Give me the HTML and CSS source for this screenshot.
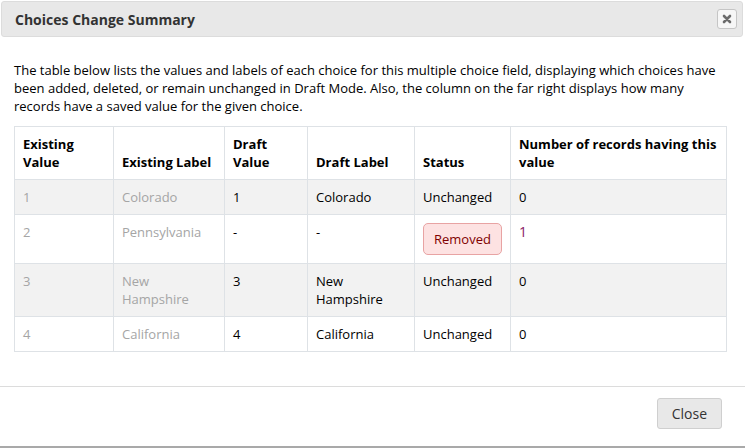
FILE: index.html
```html
<!DOCTYPE html>
<html lang="en">
<head>
    <meta charset="UTF-8">
    <title>Choices Change Summary</title>
    <link rel="stylesheet" href="styles.css">
</head>
<body>
    <div class="dialog">
        <div class="titlebar">
            <span class="title">Choices Change Summary</span>
            <button class="close-x" title="Close">
                <svg width="10" height="10" viewBox="0 0 10 10">
                    <path d="M2 2 L8 8 M8 2 L2 8" stroke="#6b6b6b" stroke-width="2.6" stroke-linecap="round"/>
                </svg>
            </button>
        </div>

        <div class="content">
            <p class="intro">The table below lists the values and labels of each choice for this multiple choice field, displaying which choices have been added, deleted, or remain unchanged in Draft Mode. Also, the column on the far right displays how many records have a saved value for the given choice.</p>

            <table class="summary">
                <colgroup>
                    <col style="width: 99px">
                    <col style="width: 111px">
                    <col style="width: 83px">
                    <col style="width: 107px">
                    <col style="width: 96px">
                    <col style="width: 216px">
                </colgroup>
                <thead>
                    <tr>
                        <th>Existing Value</th>
                        <th>Existing Label</th>
                        <th>Draft Value</th>
                        <th>Draft Label</th>
                        <th>Status</th>
                        <th>Number of records having this value</th>
                    </tr>
                </thead>
                <tbody>
                    <tr>
                        <td class="old">1</td>
                        <td class="old">Colorado</td>
                        <td>1</td>
                        <td>Colorado</td>
                        <td>Unchanged</td>
                        <td>0</td>
                    </tr>
                    <tr>
                        <td class="old">2</td>
                        <td class="old">Pennsylvania</td>
                        <td>-</td>
                        <td>-</td>
                        <td><span class="removed">Removed</span></td>
                        <td><a class="count" href="#">1</a></td>
                    </tr>
                    <tr>
                        <td class="old">3</td>
                        <td class="old">New Hampshire</td>
                        <td>3</td>
                        <td>New Hampshire</td>
                        <td>Unchanged</td>
                        <td>0</td>
                    </tr>
                    <tr>
                        <td class="old">4</td>
                        <td class="old">California</td>
                        <td>4</td>
                        <td>California</td>
                        <td>Unchanged</td>
                        <td>0</td>
                    </tr>
                </tbody>
            </table>
        </div>

        <div class="footer">
            <button class="btn">Close</button>
        </div>
    </div>
</body>
</html>
```

FILE: styles.css
```css
body {
    margin: 0;
    font-family: "Open Sans", Arial, sans-serif;
    font-size: 13px;
    color: #000;
    background-color: #fff;
}

.dialog {
    width: 745px;
    height: 448px;
    box-sizing: border-box;
    display: flex;
    flex-direction: column;
    border-bottom: 2px solid #a9a9a9;
}

.titlebar {
    display: flex;
    align-items: center;
    justify-content: space-between;
    height: 34px;
    margin: 1px 2px 0 1px;
    padding: 0 5px 0 13px;
    background-color: #e8e8e8;
    border: 1px solid #dcdcdc;
    border-radius: 3px;
}

.title {
    font-size: 14px;
    font-weight: bold;
    color: #333;
}

.close-x {
    display: flex;
    align-items: center;
    justify-content: center;
    width: 20px;
    height: 20px;
    padding: 0;
    background-color: #f6f6f6;
    border: 1px solid #c5c5c5;
    border-radius: 3px;
}

.content {
    flex: 1;
    padding: 0 14px;
    border-bottom: 1px solid #dcdcdc;
}

.intro {
    margin: 24px 0 11px;
    line-height: 18px;
}

.summary {
    width: 712px;
    border-collapse: collapse;
    table-layout: fixed;
    line-height: 18px;
}

.summary th,
.summary td {
    padding: 8px;
    border: 1px solid #dee2e6;
    text-align: left;
    vertical-align: top;
}

.summary th {
    vertical-align: bottom;
    font-weight: bold;
}

.summary tbody tr:nth-child(odd) {
    background-color: #f2f2f2;
}

.summary .old {
    color: #a5a5a5;
}

.removed {
    display: inline-block;
    padding: 6px 10px;
    color: #800000;
    background-color: #fde2e2;
    border: 1px solid #e8a3a3;
    border-radius: 5px;
}

.count {
    color: #8b1a66;
    font-size: 14px;
    text-decoration: none;
}

.footer {
    display: flex;
    justify-content: flex-end;
    height: 59px;
    padding: 11px 23px 0 0;
    box-sizing: border-box;
}

.btn {
    height: 31px;
    padding: 0 14px;
    font-family: "Open Sans", Arial, sans-serif;
    font-size: 14px;
    color: #333;
    background-color: #e8e8e8;
    border: 1px solid #cfcfcf;
    border-radius: 3px;
}
```
